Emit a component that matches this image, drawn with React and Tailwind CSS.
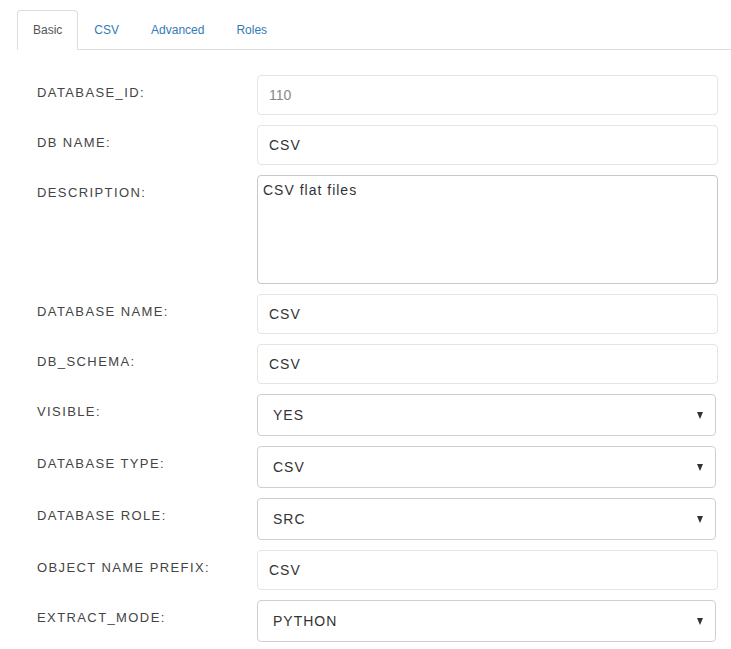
import { useState } from "react";

const tabs = ["Basic", "CSV", "Advanced", "Roles"];

const fields = [
    { label: "DATABASE_ID:", type: "input", value: "110", muted: true },
    { label: "DB NAME:", type: "input", value: "CSV" },
    { label: "DESCRIPTION:", type: "textarea", value: "CSV flat files" },
    { label: "DATABASE NAME:", type: "input", value: "CSV" },
    { label: "DB_SCHEMA:", type: "input", value: "CSV" },
    { label: "VISIBLE:", type: "select", value: "YES", options: ["YES", "NO"] },
    { label: "DATABASE TYPE:", type: "select", value: "CSV", options: ["CSV", "ORACLE", "MSSQL"] },
    { label: "DATABASE ROLE:", type: "select", value: "SRC", options: ["SRC", "TGT"] },
    { label: "OBJECT NAME PREFIX:", type: "input", value: "CSV" },
    { label: "EXTRACT_MODE:", type: "select", value: "PYTHON", options: ["PYTHON", "SQL"] },
];

function Field({ field }) {
    if (field.type === "textarea") {
        return (
            <textarea
                defaultValue={field.value}
                className="block w-full h-[109px] resize-none rounded-[4px] border border-[#c8c8c8] px-[5px] py-[4px] text-[14px] leading-[20px] tracking-[1px] text-[#333] outline-none"
            />
        );
    }
    if (field.type === "select") {
        return (
            <div className="relative mr-[2px]">
                <select
                    defaultValue={field.value}
                    className="block w-full h-[42px] appearance-none rounded-[4px] border border-[#cfcfcf] bg-white pl-[15px] text-[14px] tracking-[1px] text-[#333] outline-none"
                >
                    {field.options.map((o) => (
                        <option key={o}>{o}</option>
                    ))}
                </select>
                {/* arrow */}
                <span className="pointer-events-none absolute right-[13px] top-[18px] h-0 w-0 border-x-[3.5px] border-t-[7px] border-x-transparent border-t-[#333]" />
            </div>
        );
    }
    return (
        <input
            readOnly={field.muted}
            defaultValue={field.value}
            className={
                "block w-full h-[40px] rounded-[4px] border border-[#e4e4e4] bg-white px-[11px] text-[14px] outline-none " +
                (field.muted ? "text-[#888]" : "tracking-[1px] text-[#333]")
            }
        />
    );
}

export default function App() {
    const [active, setActive] = useState("Basic");

    return (
        <div className="min-h-screen bg-white pl-[17px] pr-[13px] pt-[10px] font-[Arial,Liberation_Sans,sans-serif]">
            {/* Tabs */}
            <ul className="-mr-[13px] flex border-b border-[#ddd]">
                {tabs.map((t) => (
                    <li key={t} className="-mb-px">
                        <button
                            onClick={() => setActive(t)}
                            className={
                                "h-[40px] px-[15px] text-[12px] rounded-t-[4px] border " +
                                (active === t
                                    ? "border-[#ddd] border-b-white bg-white text-[#555]"
                                    : "border-transparent text-[#337ab7]")
                            }
                        >
                            {t}
                        </button>
                    </li>
                ))}
            </ul>

            {/* Form */}
            <div className="pt-[25px]">
                {fields.map((f) => (
                    <div key={f.label} className="mb-[10px] flex items-start">
                        <label className="w-[240px] shrink-0 pl-[20px] pt-[9px] text-[13px] leading-[18px] tracking-[1.4px] text-[#444]">
                            {f.label}
                        </label>
                        <div className="flex-1">
                            <Field field={f} />
                        </div>
                    </div>
                ))}
            </div>
        </div>
    );
}
